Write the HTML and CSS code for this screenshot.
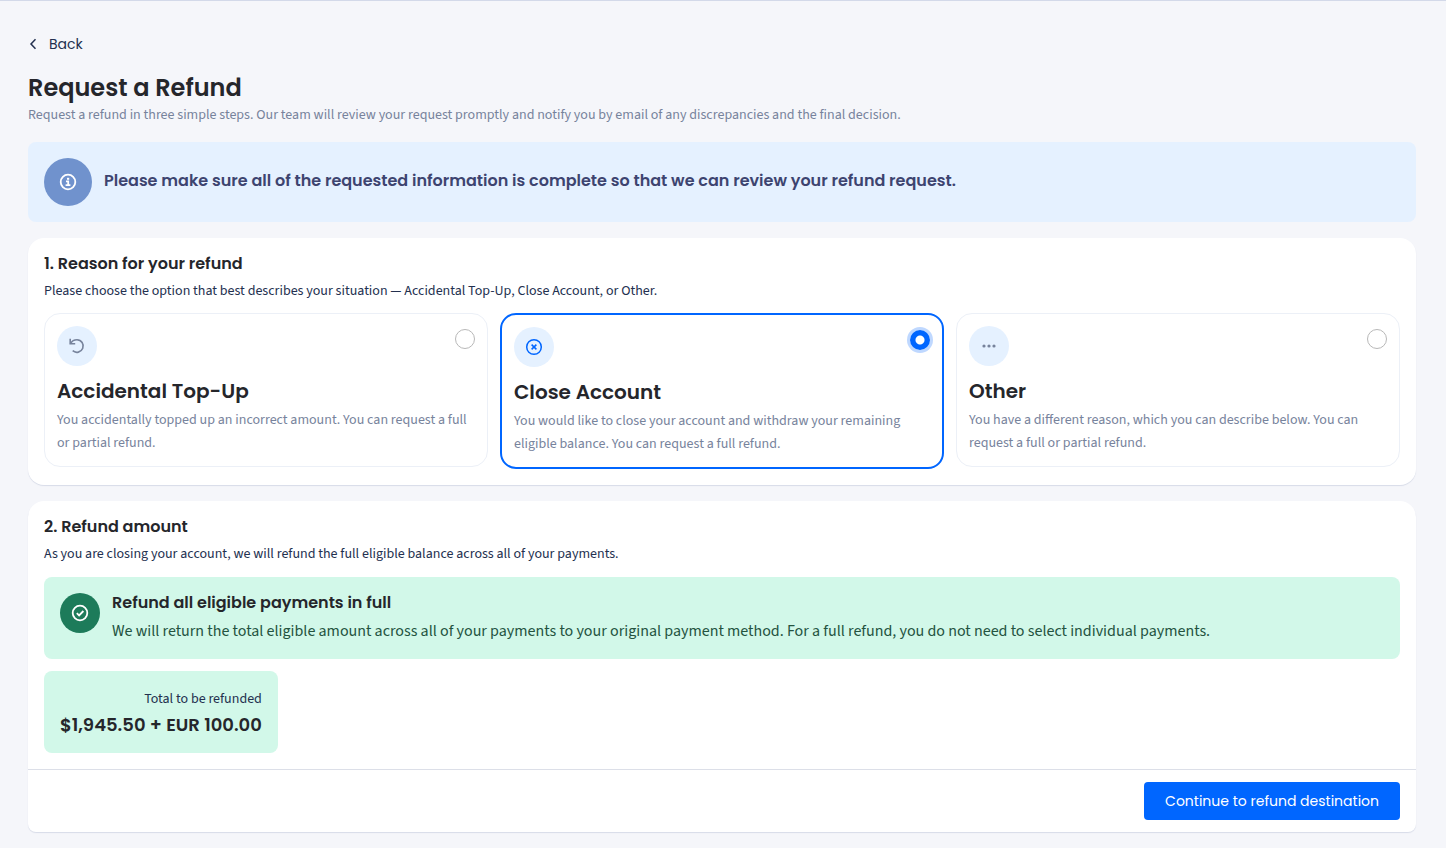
FILE: index.html
```
<!DOCTYPE html>
<html lang="en">
<head>
    <meta charset="UTF-8">
    <meta name="viewport" content="width=device-width, initial-scale=1.0">
    <title>Request a Refund</title>
    <link rel="stylesheet" href="styles.css">
</head>
<body>

    <main class="page">
        <a class="back-link" href="#">
            <svg width="10" height="12" viewBox="0 0 10 12" fill="none" stroke="currentColor" stroke-width="1.5"><path d="M7.5 1.2 3 6l4.5 4.8"/></svg>
            Back
        </a>

        <h1>Request a Refund</h1>
        <p class="subtitle">Request a refund in three simple steps. Our team will review your request promptly and notify you by email of any discrepancies and the final decision.</p>

        <div class="notice">
            <span class="notice-icon">
                <svg width="18" height="18" viewBox="0 0 18 18" fill="none" stroke="currentColor" stroke-width="1.8"><circle cx="9" cy="9" r="7.3"/><path d="M7 8.4h2.2v3.6M6.6 12.2h4.8"/><path d="M8 5.8h2.2" stroke-width="2"/></svg>
            </span>
            <p>Please make sure all of the requested information is complete so that we can review your refund request.</p>
        </div>

        <!-- Step 1 -->
        <section class="card">
            <h2>1. Reason for your refund</h2>
            <p class="lead">Please choose the option that best describes your situation — Accidental Top-Up, Close Account, or Other.</p>
            <div class="reasons">
                <label class="reason" for="reason-topup">
                    <span class="reason-head">
                        <span class="reason-icon">
                            <svg width="18" height="18" viewBox="0 0 18 18" fill="none" stroke="currentColor" stroke-width="1.6"><path d="M2.2 1.8v5h5"/><path d="M2.4 6.6C4 3.8 6.4 2.7 9 2.7a6.3 6.3 0 1 1-4.3 11"/></svg>
                        </span>
                        <input type="radio" name="reason" id="reason-topup">
                    </span>
                    <span class="reason-title">Accidental Top-Up</span>
                    <span class="reason-text">You accidentally topped up an incorrect amount. You can request a full or partial refund.</span>
                </label>
                <label class="reason selected" for="reason-close">
                    <span class="reason-head">
                        <span class="reason-icon">
                            <svg width="18" height="18" viewBox="0 0 18 18" fill="none" stroke="currentColor" stroke-width="1.5"><circle cx="9" cy="9" r="7.3"/><path d="m6.6 6.6 4.8 4.8M11.4 6.6l-4.8 4.8"/></svg>
                        </span>
                        <input type="radio" name="reason" id="reason-close" checked>
                    </span>
                    <span class="reason-title">Close Account</span>
                    <span class="reason-text">You would like to close your account and withdraw your remaining eligible balance. You can request a full refund.</span>
                </label>
                <label class="reason" for="reason-other">
                    <span class="reason-head">
                        <span class="reason-icon">
                            <svg width="18" height="18" viewBox="0 0 18 18" fill="currentColor"><circle cx="4" cy="9" r="1.6"/><circle cx="9" cy="9" r="1.6"/><circle cx="14" cy="9" r="1.6"/></svg>
                        </span>
                        <input type="radio" name="reason" id="reason-other">
                    </span>
                    <span class="reason-title">Other</span>
                    <span class="reason-text">You have a different reason, which you can describe below. You can request a full or partial refund.</span>
                </label>
            </div>
        </section>

        <!-- Step 2 -->
        <section class="card card-amount">
            <div class="card-body">
                <h2>2. Refund amount</h2>
                <p class="lead">As you are closing your account, we will refund the full eligible balance across all of your payments.</p>
                <div class="full-refund">
                    <span class="full-refund-icon">
                        <svg width="18" height="18" viewBox="0 0 18 18" fill="none" stroke="currentColor" stroke-width="1.8"><circle cx="9" cy="9" r="7.3"/><path d="m5.8 9.2 2.3 2.2 4.3-4.4"/></svg>
                    </span>
                    <div>
                        <h3>Refund all eligible payments in full</h3>
                        <p>We will return the total eligible amount across all of your payments to your original payment method. For a full refund, you do not need to select individual payments.</p>
                    </div>
                </div>
                <div class="total">
                    <span class="total-label">Total to be refunded</span>
                    <strong class="total-value">$1,945.50 + EUR 100.00</strong>
                </div>
            </div>
            <div class="card-footer">
                <button type="button" class="btn-primary">Continue to refund destination</button>
            </div>
        </section>
    </main>

</body>
</html>
```
FILE: styles.css
```
* {
    box-sizing: border-box;
}
body {
    margin: 0;
    background-color: #f5f6fa;
    border-top: 1px solid #d3d9e9;
    color: #23304f;
    font-family: "Source Sans 3", "Source Sans Pro", "Noto Sans CJK SC", sans-serif;
    font-size: 14px;
    line-height: 23px;
}
h1, h2, h3, p {
    margin: 0;
}
h1, h2, h3, .back-link, .notice p, .reason-title, .total-value, .btn-primary {
    font-family: Poppins, Inter, sans-serif;
}
h1, h2, h3, .reason-title, .total-value {
    color: #25262b;
    font-weight: 600;
}
.page {
    padding: 31px 30px 16px 28px;
}
.back-link {
    display: flex;
    align-items: center;
    gap: 11px;
    width: fit-content;
    margin-bottom: 17px;
    line-height: 24px;
    color: #23304f;
    text-decoration: none;
}
h1 {
    font-size: 24px;
    line-height: 29px;
}
h2, h3 {
    font-size: 16px;
    line-height: 20px;
}
.subtitle {
    margin-top: 2px;
    color: #77839c;
}
.notice {
    display: flex;
    gap: 12px;
    margin: 15px 0 16px;
    padding: 16px;
    background-color: #e5f1ff;
    border-radius: 8px;
}
.notice-icon, .reason-icon, .full-refund-icon {
    display: flex;
    flex-shrink: 0;
    align-items: center;
    justify-content: center;
    width: 40px;
    height: 40px;
    border-radius: 50%;
}
.notice-icon {
    width: 48px;
    height: 48px;
    background-color: #7092cd;
    color: #fff;
}
.notice p {
    font-size: 16px;
    line-height: 46px;
    font-weight: 600;
    color: #3d4470;
}

/* Cards */
.card {
    margin-bottom: 16px;
    padding: 16px;
    background-color: #fff;
    border-radius: 16px;
    box-shadow: 0 1px 1px #d8dce8;
}
.lead {
    margin: 6px 0 10px;
}
.reasons {
    display: grid;
    grid-template-columns: repeat(3, 1fr);
    align-items: start;
    gap: 12px;
}
.reason {
    display: flex;
    flex-direction: column;
    padding: 12px 12px 11px;
    border: 1px solid #ecf0f7;
    border-radius: 16px;
    cursor: pointer;
}
.reason.selected {
    border: 2px solid #0066ff;
}
.reason-head {
    display: flex;
    justify-content: space-between;
    align-items: flex-start;
    margin-bottom: 10px;
}
.reason-icon {
    background-color: #e5f1ff;
    color: #77839c;
}
.selected .reason-icon {
    color: #0066ff;
}
.reason-title {
    font-size: 20px;
    line-height: 31px;
}
.reason-text {
    margin-top: 2px;
    color: #77839c;
}
.reason input {
    appearance: none;
    width: 20px;
    height: 20px;
    margin: 3px 0 0;
    border: 1px solid #b8b8b8;
    border-radius: 50%;
    background-color: #fff;
}
.reason input:checked {
    border: 0;
    background: radial-gradient(circle, #fff 4px, #0066ff 5px);
    box-shadow: 0 0 0 3px #bfd8ff;
}

/* Refund amount */
.card-amount {
    padding: 0;
    border-radius: 16px 16px 8px 8px;
}
.card-body {
    padding: 16px;
}
.full-refund, .total {
    padding: 16px;
    background-color: #d2f8e9;
    border-radius: 8px;
}
.full-refund {
    display: flex;
    gap: 12px;
    margin: 11px 0 12px;
}
.full-refund-icon {
    background-color: #1d7b5a;
    color: #fff;
}
.full-refund p {
    margin-top: 6px;
    font-size: 16px;
    line-height: 24px;
    color: #24533f;
}
.total {
    display: inline-flex;
    flex-direction: column;
    gap: 2px;
    text-align: right;
    vertical-align: top;
}
.total-label {
    line-height: 24px;
}
.total-value {
    font-size: 18px;
    line-height: 24px;
}
.card-footer {
    display: flex;
    justify-content: flex-end;
    padding: 12px 16px;
    border-top: 1px solid #dcdfe8;
}
.btn-primary {
    padding: 8px 21px;
    border: 0;
    border-radius: 4px;
    background-color: #0066ff;
    color: #fff;
    font-size: 14px;
    line-height: 22px;
    cursor: pointer;
}
```
